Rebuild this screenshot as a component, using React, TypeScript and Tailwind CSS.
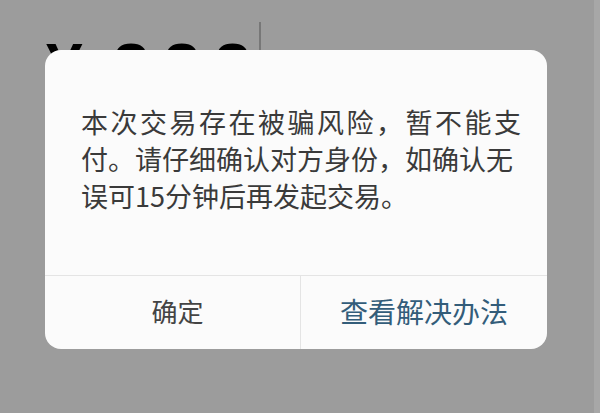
export default function App() {
  return (
    <div className="relative w-[600px] h-[413px] overflow-hidden bg-[#9c9c9c] font-['Noto_Sans_CJK_SC',sans-serif]">
      {/* amount being typed, sits behind the alert */}
      <div className="flex items-start pl-[46px] pt-[34px]">
        <div className="flex items-center gap-[30px] font-['Liberation_Sans',sans-serif] text-[66px] font-bold leading-none text-black">
          <span>¥</span>
          <span className="tracking-[14px]">888</span>
        </div>
        <div className="ml-[-6px] mt-[-12px] h-[30px] w-[2px] bg-[#777]" />
      </div>
      <div className="absolute right-0 top-0 h-full w-[6px] bg-[#a7a7a7]" />

      {/* alert */}
      <div className="absolute left-[45px] top-[50px] flex h-[299px] w-[502px] flex-col overflow-hidden rounded-[16px] bg-[#fbfbfb]">
        <div className="flex h-[225px] flex-col whitespace-nowrap pl-[36px] pt-[53px] text-[27px] leading-[37px] text-[#3a3a3a]">
          <span className="tracking-[2.5px]">本次交易存在被骗风险，暂不能支</span>
          <span>付。请仔细确认对方身份，如确认无</span>
          <span>误可15分钟后再发起交易。</span>
        </div>
        <div className="flex flex-1 border-t border-[#e4e4e4]">
          <button className="flex flex-1 items-center justify-center pb-[4px] pl-[10px] text-[26px] text-[#444]">
            确定
          </button>
          <div className="w-px bg-[#e4e4e4]" />
          <button className="flex w-[246px] items-center justify-center pb-[4px] text-[28px] text-[#335d7a]">
            查看解决办法
          </button>
        </div>
      </div>
    </div>
  );
}
